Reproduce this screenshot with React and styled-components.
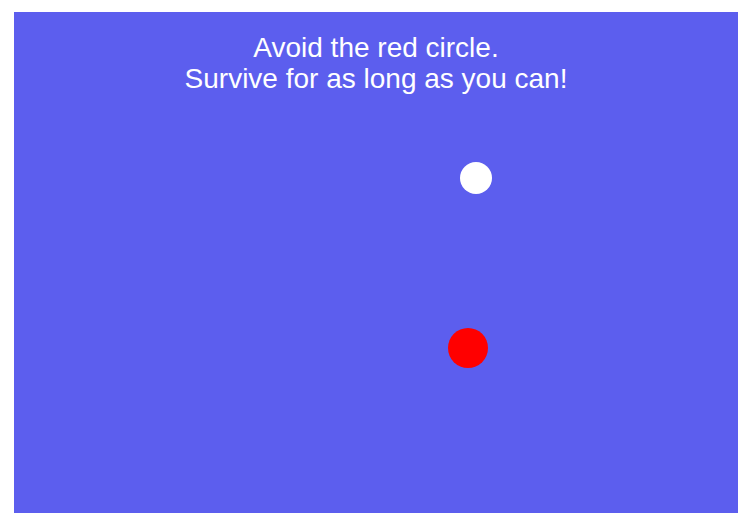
import React from "react";
import styled, { createGlobalStyle } from "styled-components";

const GlobalStyle = createGlobalStyle`
  html, body {
    margin: 0;
    padding: 0;
    background: #ffffff;
  }
`;

const Page = styled.div`
  padding: 12px 11px 16px 14px;
`;

const Board = styled.div`
  position: relative;
  width: 724px;
  height: 501px;
  background-color: #5c5eee;
  overflow: hidden;
`;

const Message = styled.div`
  padding-top: 20px;
  text-align: center;
  color: #ffffff;
  font-family: "Liberation Sans", Arial, sans-serif;
  font-size: 28px;
  line-height: 31px;
`;

const Ball = styled.div`
  position: absolute;
  border-radius: 50%;
  width: ${(p) => p.size}px;
  height: ${(p) => p.size}px;
  background-color: ${(p) => p.color};
`;

const balls = [
  { id: "player", x: 446, y: 150, size: 32, color: "#ffffff" },
  { id: "enemy", x: 434, y: 316, size: 40, color: "#ff0000" },
];

export default function App() {
  return (
    <>
      <GlobalStyle />
      <Page>
        <Board>
          <Message>
            Avoid the red circle.
            <br />
            Survive for as long as you can!
          </Message>
          {balls.map((b) => (
            <Ball
              key={b.id}
              size={b.size}
              color={b.color}
              style={{ left: b.x, top: b.y }}
            />
          ))}
        </Board>
      </Page>
    </>
  );
}
